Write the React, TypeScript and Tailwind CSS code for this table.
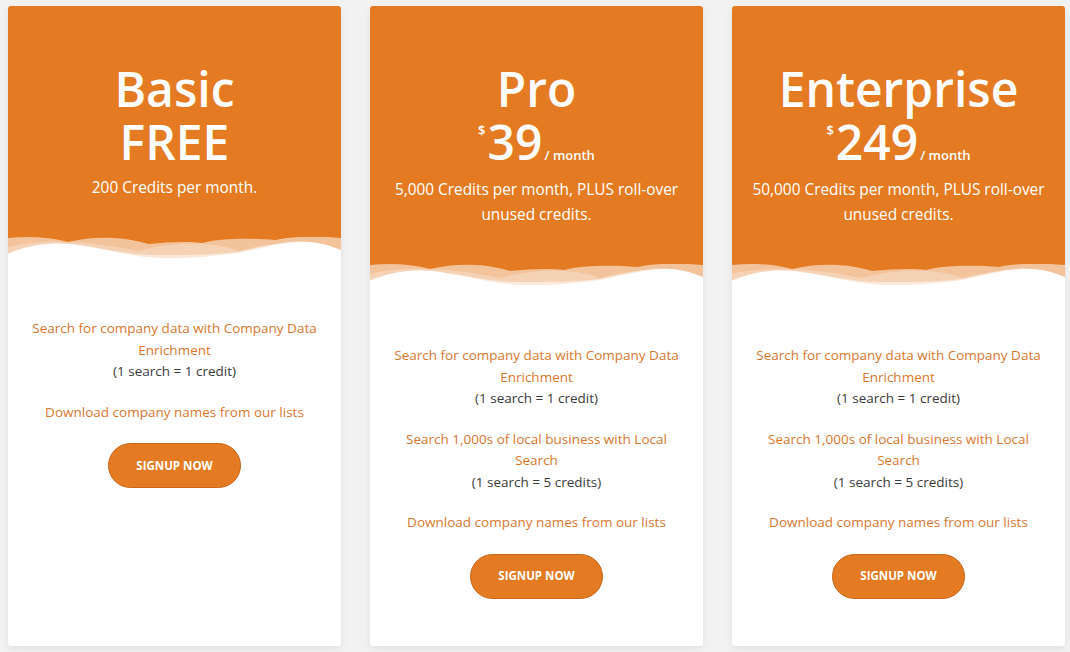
import React from 'react';

type Feature = { title: string; note?: string };

type Plan = {
  name: string;
  free?: boolean;
  price?: string;
  blurb: string;
  features: Feature[];
};

const plans: Plan[] = [
  {
    name: 'Basic',
    free: true,
    blurb: '200 Credits per month.',
    features: [
      { title: 'Search for company data with Company Data Enrichment', note: '(1 search = 1 credit)' },
      { title: 'Download company names from our lists' },
    ],
  },
  {
    name: 'Pro',
    price: '39',
    blurb: '5,000 Credits per month, PLUS roll-over unused credits.',
    features: [
      { title: 'Search for company data with Company Data Enrichment', note: '(1 search = 1 credit)' },
      { title: 'Search 1,000s of local business with Local Search', note: '(1 search = 5 credits)' },
      { title: 'Download company names from our lists' },
    ],
  },
  {
    name: 'Enterprise',
    price: '249',
    blurb: '50,000 Credits per month, PLUS roll-over unused credits.',
    features: [
      { title: 'Search for company data with Company Data Enrichment', note: '(1 search = 1 credit)' },
      { title: 'Search 1,000s of local business with Local Search', note: '(1 search = 5 credits)' },
      { title: 'Download company names from our lists' },
    ],
  },
];

const Wave = () => (
  <svg className="block w-full h-[22px]" viewBox="0 0 333 22" preserveAspectRatio="none">
    <path
      d="M0 1 C20 -1 42 0 60 5 C85 -1 115 -1 140 7 C160 5 180 4 194 6 C212 1 245 1 267 3 C285 -1 310 -1 333 1 L333 22 L0 22 Z"
      fill="#f3c39c"
    />
    <path
      d="M0 10 C30 3 70 2 130 14 C165 5 205 4 230 14 C260 6 300 1 333 14 L333 22 L0 22 Z"
      fill="#f6d2b4"
    />
    <path
      d="M0 16 C20 8 40 5 60 7 C95 10 115 18 150 18 C180 18 205 18 230 15 C258 9 280 3 300 5 C315 7 325 11 333 15 L333 22 L0 22 Z"
      fill="#fbeadb"
    />
    <path
      d="M0 17 C20 8 42 5 62 7 C95 11 118 19 150 21 C185 22 205 19 230 16 C258 10 280 4 300 5 C316 6 325 10 333 13 L333 22 L0 22 Z"
      fill="#ffffff"
    />
  </svg>
);

const PlanCard = ({ plan }: { plan: Plan }) => (
  <div className="w-[333px] h-[640px] bg-white rounded-[3px] overflow-hidden shadow-[0_3px_8px_rgba(0,0,0,0.07)] flex flex-col">
    <div className="bg-[#e47b22] text-white text-center">
      <div className="px-4 pt-14 pb-[37px]">
        <h2 className="text-[48px] leading-[53px] font-semibold">{plan.name}</h2>
        {plan.free ? (
          <>
            <div className="text-[48px] leading-[53px] font-semibold">FREE</div>
            <p className="mt-[8px] text-[15.4px] leading-6">{plan.blurb}</p>
          </>
        ) : (
          <>
            <div className="mt-[3px] flex justify-center items-baseline h-[48px]">
              <span className="self-start mt-[6px] text-[13px] leading-none font-semibold mr-[2px]">$</span>
              <span className="text-[48px] leading-[48px] font-semibold">{plan.price}</span>
              <span className="text-[13px] font-semibold ml-[2px]">/ month</span>
            </div>
            <p className="mt-[12px] text-[15.4px] leading-[24.5px]">{plan.blurb}</p>
          </>
        )}
      </div>
      <Wave />
    </div>

    <div className="px-5 pt-[59px] text-center text-[13.5px] leading-[21.5px]">
      {plan.features.map((f) => (
        <div key={f.title} className="mb-[19px]">
          <p className="text-[#d9772f]">{f.title}</p>
          {f.note && <p className="text-[#3a3a3a]">{f.note}</p>}
        </div>
      ))}
      <button className="mt-[1px] w-[133px] h-[45px] rounded-full bg-[#e47b22] border border-[#c9661a] text-white text-[11.5px] font-bold">
        SIGNUP NOW
      </button>
    </div>
  </div>
);

export default function App() {
  return (
    <div className="w-[1070px] h-[652px] bg-[#f2f2f2] pl-2 pt-[6px] flex gap-[29px] font-['Open_Sans',sans-serif] overflow-hidden">
      {plans.map((p) => (
        <PlanCard key={p.name} plan={p} />
      ))}
    </div>
  );
}
